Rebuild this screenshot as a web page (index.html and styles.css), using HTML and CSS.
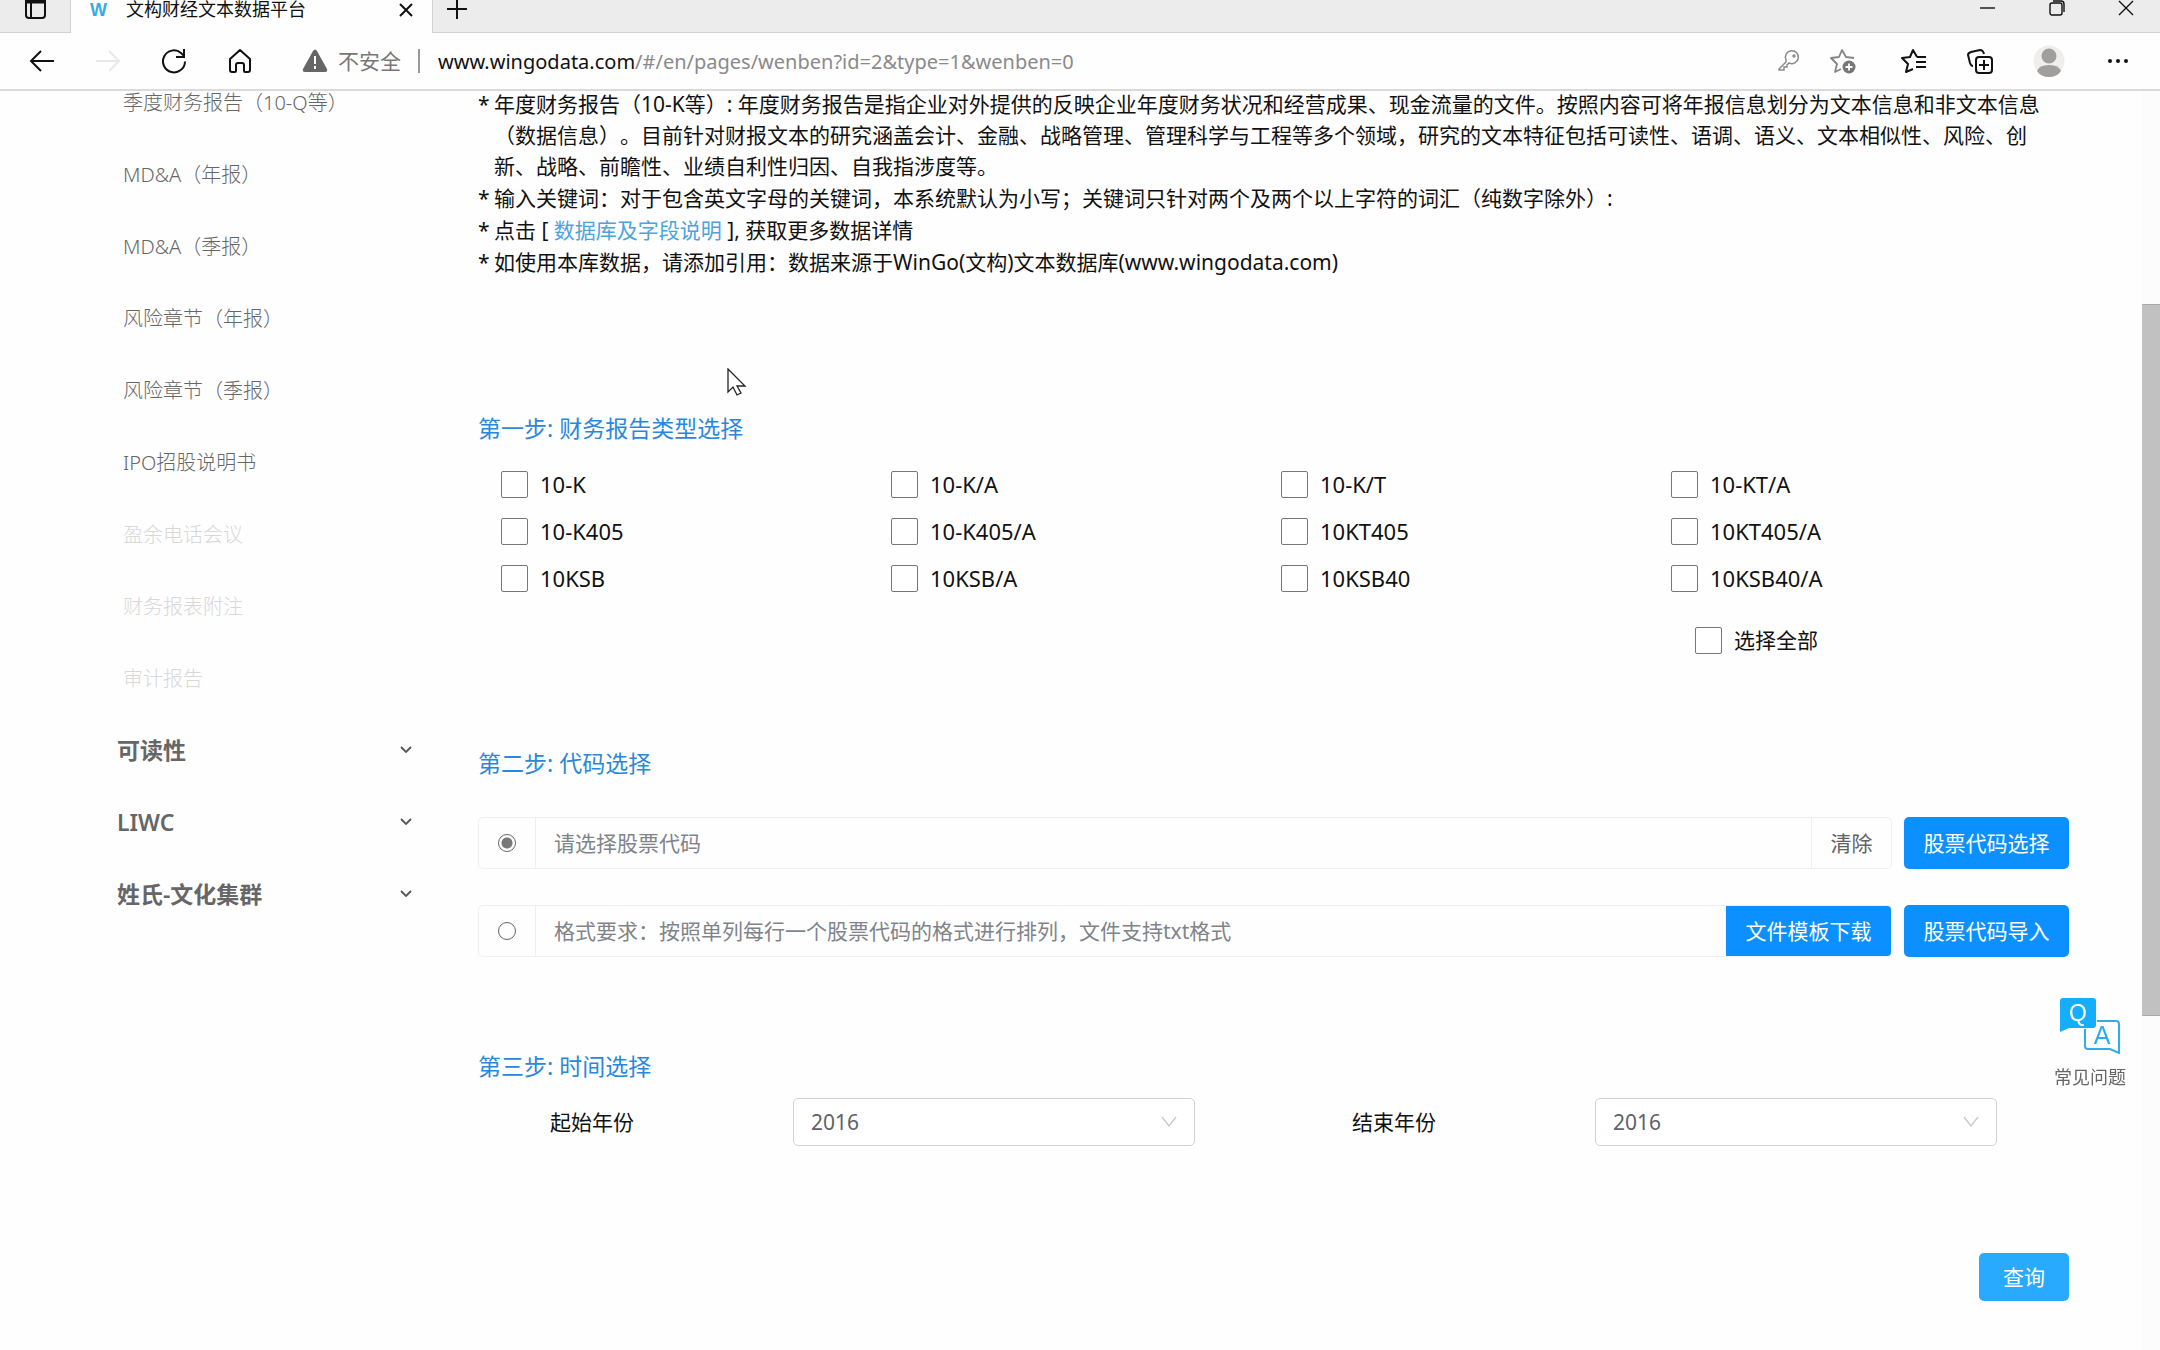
FILE: index.html
```html
<!DOCTYPE html>
<html lang="zh-CN">
<head>
<meta charset="utf-8">
<title>文构财经文本数据平台</title>
<link rel="stylesheet" href="styles.css">
</head>
<body>
<header class="browser">
  <div class="tabstrip">
    <button class="tab-menu" aria-label="标签页操作"><svg width="24" height="20" viewBox="0 0 24 20" fill="none" stroke="#111" stroke-width="2"><path d="M2 0v15q0 3 3 3h13q3 0 3-3V0M7 3v15"/><path d="M2 1h19" stroke-width="5"/></svg></button>
    <div class="tab">
      <span class="tab-logo">W</span>
      <span class="tab-title">文构财经文本数据平台</span>
      <button class="tab-close" aria-label="关闭标签页"><svg width="14" height="14" viewBox="0 0 14 14" fill="none" stroke="#111" stroke-width="2"><path d="M1 1l12 12M13 1L1 13"/></svg></button>
    </div>
    <button class="tab-new" aria-label="新建标签页"><svg width="20" height="20" viewBox="0 0 20 20" fill="none" stroke="#111" stroke-width="2"><path d="M10 0v19M0 9h20"/></svg></button>
    <div class="window-controls">
      <button aria-label="最小化"><svg width="16" height="16" viewBox="0 0 16 16" fill="none" stroke="#111" stroke-width="1.4"><path d="M0 8h15"/></svg></button>
      <button aria-label="还原"><svg width="16" height="16" viewBox="0 0 16 16" fill="none" stroke="#111" stroke-width="1.4"><rect x="1" y="3" width="12" height="12" rx="2"/><path d="M4 1h8q3 0 3 3v8"/></svg></button>
      <button aria-label="关闭"><svg width="16" height="16" viewBox="0 0 16 16" fill="none" stroke="#111" stroke-width="1.4"><path d="M1 1l14 14M15 1L1 15"/></svg></button>
    </div>
  </div>
  <div class="toolbar">
    <div class="nav">
      <button aria-label="后退"><svg width="26" height="26" viewBox="0 0 26 26" fill="none" stroke="#111" stroke-width="2"><path d="M25 13H2M12 3L2 13l10 10"/></svg></button>
      <button aria-label="前进" disabled><svg width="26" height="26" viewBox="0 0 26 26" fill="none" stroke="#e8e8e8" stroke-width="2"><path d="M1 13h23M14 3l10 10-10 10"/></svg></button>
      <button aria-label="刷新"><svg width="26" height="26" viewBox="0 0 26 26" fill="none" stroke="#111" stroke-width="2"><path d="M24 13.500a11 11 0 1 1-4-8.600L23 8M23 1v8h-8"/></svg></button>
      <button aria-label="主页"><svg width="26" height="26" viewBox="0 0 26 26" fill="none" stroke="#111" stroke-width="2" stroke-linejoin="round"><path d="M3 11L13 2l10 9v11q0 2-2 2h-3q-1 0-1-1v-6q0-2-2-2h-4q-2 0-2 2v6q0 1-1 1H5q-2 0-2-2z"/></svg></button>
    </div>
    <svg class="warn" width="26" height="26" viewBox="0 0 26 26"><path d="M11 3q2-3 4 0l10 18q1 3-2 3H3q-3 0-2-3z" fill="#666"/><path d="M13 8v8M13 18v3" stroke="#fff" stroke-width="2"/></svg>
    <span class="insecure">不安全</span>
    <span class="divider"></span>
    <span class="url">www.wingodata.com<span class="url-path">/#/en/pages/wenben?id=2&amp;type=1&amp;wenben=0</span></span>
    <div class="address-actions">
      <button aria-label="密码"><svg width="26" height="26" viewBox="0 0 26 26" fill="none" stroke="#8a8a8a" stroke-width="1.500"><path d="M11 15L4 22v1H9v-3h3v-2l2-2a6.500 6.500 0 1 0-3-3z" transform="translate(0 -1)"/><circle cx="19" cy="8" r="1"/></svg></button>
      <button aria-label="添加收藏"><svg width="26" height="26" viewBox="0 0 26 26" fill="none" stroke="#858585" stroke-width="1.800" stroke-linejoin="round"><path d="M24 10l-8-1-4-7-3 7-8 1 6 6-2 8 6-3"/><circle cx="19" cy="19" r="6.500" fill="#777" stroke="none"/><path d="M19 15.500v7M15.500 19h7" stroke="#fff"/></svg></button>
    </div>
    <div class="actions">
      <button aria-label="收藏夹"><svg width="26" height="26" viewBox="0 0 26 26" fill="none" stroke="#111" stroke-width="2" stroke-linejoin="round"><path d="M16 9l-4-7-3 7-8 1 6 6-2 8 7-3M16 9h9M15 14h10M15 19h10"/></svg></button>
      <button aria-label="集锦"><svg width="26" height="26" viewBox="0 0 26 26" fill="none" stroke="#111" stroke-width="2"><rect x="9" y="9" width="16" height="16" rx="3"/><path d="M17 12v10M12 17h10M6 18Q4 18 3 15L1 7q0-2 3-3l9-2q3 0 4 4"/></svg></button>
      <button aria-label="用户"><svg width="32" height="32" viewBox="0 0 32 32"><circle cx="16" cy="16" r="15.500" fill="#f0eeec"/><circle cx="16" cy="11" r="7.500" fill="#a19f9d"/><path d="M4 26q2-6 12-6t12 6q-4 6-12 6T4 26" fill="#a19f9d"/></svg></button>
      <button aria-label="更多"><svg width="26" height="26" viewBox="0 0 26 26" fill="#111"><circle cx="5" cy="13" r="2"/><circle cx="13" cy="13" r="2"/><circle cx="21" cy="13" r="2"/></svg></button>
    </div>
  </div>
</header>

<div class="viewport">
  <nav class="sidebar">
    <ul class="side-list">
      <li><a href="#q10">季度财务报告（10-Q等）</a></li>
      <li><a href="#mda-y">MD&amp;A（年报）</a></li>
      <li><a href="#mda-q">MD&amp;A（季报）</a></li>
      <li><a href="#risk-y">风险章节（年报）</a></li>
      <li><a href="#risk-q">风险章节（季报）</a></li>
      <li><a href="#ipo">IPO招股说明书</a></li>
      <li class="off">盈余电话会议</li>
      <li class="off">财务报表附注</li>
      <li class="off">审计报告</li>
    </ul>
    <button class="side-group">可读性<svg width="14" height="10" viewBox="0 0 14 10" fill="none" stroke="#555" stroke-width="1.800"><path d="M2 2l5 5 5-5"/></svg></button>
    <button class="side-group">LIWC<svg width="14" height="10" viewBox="0 0 14 10" fill="none" stroke="#555" stroke-width="1.800"><path d="M2 2l5 5 5-5"/></svg></button>
    <button class="side-group">姓氏-文化集群<svg width="14" height="10" viewBox="0 0 14 10" fill="none" stroke="#555" stroke-width="1.800"><path d="M2 2l5 5 5-5"/></svg></button>
  </nav>

  <main class="main">
    <ul class="intro">
      <li>年度财务报告（10-K等）: 年度财务报告是指企业对外提供的反映企业年度财务状况和经营成果、现金流量的文件。按照内容可将年报信息划分为文本信息和非文本信息（数据信息）。目前针对财报文本的研究涵盖会计、金融、战略管理、管理科学与工程等多个领域，研究的文本特征包括可读性、语调、语义、文本相似性、风险、创新、战略、前瞻性、业绩自利性归因、自我指涉度等。</li>
      <li>输入关键词：对于包含英文字母的关键词，本系统默认为小写；关键词只针对两个及两个以上字符的词汇（纯数字除外）:</li>
      <li>点击 [ <a href="#fields">数据库及字段说明</a> ], 获取更多数据详情</li>
      <li>如使用本库数据，请添加引用：数据来源于WinGo(文构)文本数据库(www.wingodata.com)</li>
    </ul>

    <section class="step">
      <h2>第一步: 财务报告类型选择</h2>
      <div class="types">
        <label><input type="checkbox">10-K</label>
        <label><input type="checkbox">10-K/A</label>
        <label><input type="checkbox">10-K/T</label>
        <label><input type="checkbox">10-KT/A</label>
        <label><input type="checkbox">10-K405</label>
        <label><input type="checkbox">10-K405/A</label>
        <label><input type="checkbox">10KT405</label>
        <label><input type="checkbox">10KT405/A</label>
        <label><input type="checkbox">10KSB</label>
        <label><input type="checkbox">10KSB/A</label>
        <label><input type="checkbox">10KSB40</label>
        <label><input type="checkbox">10KSB40/A</label>
        <label class="all"><input type="checkbox">选择全部</label>
      </div>
    </section>

    <section class="step">
      <h2>第二步: 代码选择</h2>
      <div class="codes">
        <div class="code-row">
          <div class="group">
            <span class="pick"><input type="radio" name="source" aria-label="选择股票代码" checked></span>
            <input class="field" type="text" placeholder="请选择股票代码" aria-label="股票代码">
            <button class="clear">清除</button>
          </div>
          <button class="primary">股票代码选择</button>
        </div>
        <div class="code-row">
          <div class="group">
            <span class="pick"><input type="radio" name="source" aria-label="导入股票代码"></span>
            <input class="field" type="text" placeholder="格式要求：按照单列每行一个股票代码的格式进行排列，文件支持txt格式" aria-label="股票代码文件">
            <button class="template">文件模板下载</button>
          </div>
          <button class="primary">股票代码导入</button>
        </div>
      </div>
    </section>

    <section class="step">
      <h2 class="tight">第三步: 时间选择</h2>
      <div class="years">
        <div class="year"><label for="from">起始年份</label>
          <div class="select"><select id="from"><option>2016</option></select><svg width="16" height="12" viewBox="0 0 16 12" fill="none" stroke="#c4c8ce" stroke-width="1.300"><path d="M1 1l7 9 7-9"/></svg></div></div>
        <div class="year"><label for="to">结束年份</label>
          <div class="select"><select id="to"><option>2016</option></select><svg width="16" height="12" viewBox="0 0 16 12" fill="none" stroke="#c4c8ce" stroke-width="1.300"><path d="M1 1l7 9 7-9"/></svg></div></div>
      </div>
    </section>
    <button class="query">查询</button>
  </main>

  <div class="scrollbar"><div class="thumb"></div></div>
</div>

<a class="faq" href="#faq">
  <svg width="60" height="56" viewBox="0 0 60 56" font-family="Liberation Sans, sans-serif"><path d="M3 0h30q3 0 3 3v24q0 3-3 3H9L0 34V3q0-3 3-3z" fill="#14aefc"/><path d="M37 23h19q3 0 3 3v29l-9-4H28q-3 0-3-3V31" fill="none" stroke="#2fadea" stroke-width="2"/><text x="18" y="23" text-anchor="middle" font-size="23" fill="#fff">Q</text><text x="42" y="46" text-anchor="middle" font-size="25" fill="#2fadea">A</text></svg>
  <span>常见问题</span>
</a>
<svg class="pointer" width="20" height="30" viewBox="0 0 20 30" fill="#fff" stroke="#222" stroke-width="1.300"><path d="M1 1v23l5-5 4 8 4-2-4-7h8z"/></svg>
</body>
</html>
```

FILE: styles.css
```css
* { box-sizing: border-box; }

body {
  margin: 0;
  min-height: 100vh;
  display: flex;
  flex-direction: column;
  background: #fefefe;
  color: #111;
  font-family: "Noto Sans", "Noto Sans CJK SC", sans-serif;
  font-size: 21px;
  line-height: 31px;
  text-spacing-trim: space-all;
  text-autospace: no-autospace;
}

button, input, select { font: inherit; color: inherit; }
button { padding: 0; border: 0; background: none; cursor: pointer; }
a { color: inherit; text-decoration: none; }
svg { display: block; }
ul { margin: 0; padding: 0; list-style: none; }

/* Browser frame */
.tabstrip {
  display: flex;
  height: 33px;
  background: #ececec;
  border-bottom: 1px solid #d2d2d2;
}
.tabstrip button { align-self: flex-start; }
.tab-menu { width: 70px; padding-left: 24px; }
.tab {
  display: flex;
  align-items: flex-start;
  width: 363px;
  height: 33px;
  padding: 0 19px;
  background: #fefefe;
  border: solid #d2d2d2;
  border-width: 0 1px;
}
.tab-logo {
  width: 36px;
  color: #35abe8;
  font-family: "Liberation Sans", sans-serif;
  font-size: 18px;
  font-weight: 700;
  line-height: 20px;
}
.tab-title { flex: 1; font-size: 18px; line-height: 18px; }
.tab-close { padding-top: 3px; }
.tab-new { margin-left: 14px; }
.window-controls { display: flex; gap: 53px; margin-left: auto; padding-right: 26px; }
.toolbar {
  display: flex;
  align-items: center;
  height: 58px;
  padding: 0 29px;
  border-bottom: 2px solid #dadada;
}
.nav { display: flex; gap: 40px; margin-right: 49px; }
.warn { margin-right: 10px; }
.insecure { color: #777; }
.divider { width: 2px; height: 24px; margin: 0 18px 0 17px; background: #999; }
.url { flex: 1; font-size: 20px; }
.url-path { color: #8a8a8a; }
.address-actions { display: flex; gap: 29px; margin-right: 45px; }
.actions { display: flex; align-items: center; gap: 40px; }

/* Page */
.viewport { flex: 1; display: flex; }
.sidebar { width: 478px; padding-left: 117px; color: #666; }
.side-list {
  display: grid;
  gap: 48px;
  padding-left: 6px;
  margin-bottom: 47px;
  font-size: 20px;
  line-height: 24px;
  font-weight: 300;
}
.off { color: #d8d8d8; }
.side-group {
  display: flex;
  align-items: center;
  justify-content: space-between;
  width: 296px;
  margin-bottom: 48px;
  font-size: 23px;
  font-weight: 600;
  line-height: 24px;
}

.main { flex: 1; padding-right: 73px; display: flex; flex-direction: column; }
.intro { display: grid; gap: 1px; margin: -2px 0 135px; }
.intro li { padding: 0 8px 0 16px; text-indent: -16px; }
.intro li::before { content: "*"; display: inline-block; width: 16px; text-indent: 0; }
.intro a { color: #4ba3df; }

.step { margin-bottom: 94px; }
h2 { margin: 0 0 39px; font-size: 23px; font-weight: 400; line-height: 30px; color: #2b87db; }
.types {
  display: grid;
  grid-template-columns: repeat(4, 1fr);
  row-gap: 20px;
  margin-top: -11px;
  padding: 0 8px 0 23px;
  font-size: 22px;
}
.types label { display: flex; align-items: center; gap: 12px; height: 27px; }
.types input {
  appearance: none;
  width: 27px;
  height: 27px;
  margin: 0;
  border: 1px solid #777;
  border-radius: 2px;
  background: #fff;
}
.types .all { grid-column: 4; margin: 15px 0 0 24px; font-size: 21px; }

.codes { display: grid; gap: 36px; }
.code-row { display: flex; gap: 12px; height: 52px; }
.group { flex: 1; display: flex; border: 1px solid #eeeff1; border-radius: 5px; overflow: hidden; }
.pick { display: flex; align-items: center; justify-content: center; width: 57px; border-right: 1px solid #eeeff1; }
.pick input {
  appearance: none;
  width: 18px;
  height: 18px;
  margin: 0;
  border: 1px solid #666;
  border-radius: 50%;
}
.pick input:checked { background: radial-gradient(circle, #777 5px, #fff 6px); }
.field { flex: 1; padding: 0 18px; border: 0; background: none; }
.field::placeholder { color: #808489; opacity: 1; }
.clear { width: 80px; border-left: 1px solid #eeeff1; color: #606266; }
.template, .primary { width: 165px; background: #0c90ff; color: #fff; }
.primary { border-radius: 5px; }

.tight { margin-bottom: 17px; }
.years { display: flex; gap: 157px; padding: 0 72px; }
.year { flex: 1; display: flex; align-items: center; }
.year label { width: 243px; }
.select { flex: 1; display: grid; align-items: center; }
.select select {
  grid-area: 1 / 1;
  appearance: none;
  height: 48px;
  padding: 0 17px;
  border: 1px solid #cfd2d6;
  border-radius: 5px;
  background: #fff;
  color: #606266;
}
.select svg { grid-area: 1 / 1; justify-self: end; margin-right: 18px; pointer-events: none; }
.query {
  align-self: flex-end;
  width: 90px;
  height: 48px;
  margin: 13px 0 40px;
  border-radius: 5px;
  background: #28aaff;
  color: #fff;
}

.scrollbar { width: 18px; padding-top: 213px; background: #fcfcfc; }
.thumb { height: 712px; background: #c1c1c1; border: solid #a8a8a8; border-width: 1px 0; }

.faq {
  position: fixed;
  right: 34px;
  top: 998px;
  display: flex;
  flex-direction: column;
  align-items: center;
  gap: 8px;
  color: #666;
  font-size: 18px;
}
.pointer { position: absolute; left: 727px; top: 368px; }
```
